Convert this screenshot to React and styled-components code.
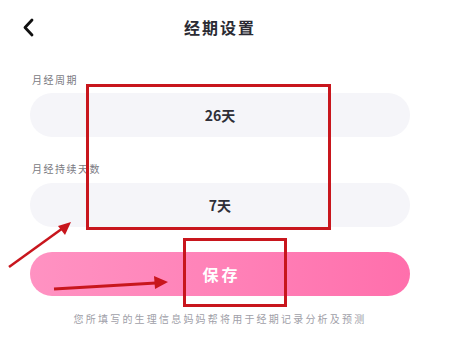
import React from 'react';
import styled, { createGlobalStyle } from 'styled-components';

const GlobalStyle = createGlobalStyle`
  html, body {
    margin: 0;
    padding: 0;
    background: #ffffff;
  }
  body {
    font-family: "Noto Sans CJK SC", "Noto Sans", sans-serif;
  }
`;

const Screen = styled.div`
  position: relative;
  width: 460px;
  height: 354px;
  overflow: hidden;
  background: #ffffff;
`;

const Header = styled.header`
  position: relative;
  width: 440px;
  height: 54px;
  display: flex;
  align-items: center;
  justify-content: center;
`;

const BackButton = styled.button`
  position: absolute;
  left: 20px;
  top: 16px;
  width: 16px;
  height: 22px;
  padding: 0;
  border: none;
  background: none;
  display: flex;
  align-items: center;
  justify-content: center;
`;

const Title = styled.h1`
  margin: 0;
  font-size: 16px;
  font-weight: 700;
  letter-spacing: 2px;
  color: #2b2b33;
`;

const Form = styled.div`
  width: 380px;
  margin-left: 30px;
  display: flex;
  flex-direction: column;
`;

const Label = styled.div`
  margin-top: ${(p) => p.$top}px;
  padding-left: 2px;
  font-size: 10px;
  line-height: 14px;
  letter-spacing: 1.5px;
  color: #7a7a82;
`;

const Field = styled.div`
  margin-top: ${(p) => p.$top}px;
  height: 44px;
  border-radius: 22px;
  background: #f5f5f9;
  display: flex;
  align-items: center;
  justify-content: center;
  font-size: 14px;
  font-weight: 700;
  color: #2f2f38;
`;

const SaveButton = styled.button`
  margin-top: 25px;
  height: 44px;
  border: none;
  border-radius: 22px;
  background: linear-gradient(90deg, #ff92c2 0%, #ff82b8 50%, #ff6fac 100%);
  color: #ffffff;
  font-family: inherit;
  font-size: 16px;
  font-weight: 700;
  letter-spacing: 3px;
  padding: 0 0 0 3px;
`;

const Note = styled.p`
  margin: 16px 0 0;
  text-align: center;
  font-size: 10px;
  line-height: 14px;
  letter-spacing: 2.2px;
  color: #a0a0a8;
`;

const Overlay = styled.svg`
  position: absolute;
  left: 0;
  top: 0;
  pointer-events: none;
`;

const RED = '#c8161d';

const Annotations = () => (
  <Overlay width="460" height="354" viewBox="0 0 460 354">
    <rect x="87.5" y="85.5" width="242" height="143" fill="none" stroke={RED} strokeWidth="3" />
    <rect x="184.5" y="239.5" width="101" height="66" fill="none" stroke={RED} strokeWidth="3" />
    <line x1="9" y1="267" x2="63" y2="228" stroke={RED} strokeWidth="2.5" />
    <polygon points="71,222 58,226 65,235" fill={RED} />
    <line x1="54" y1="289" x2="156" y2="283" stroke={RED} strokeWidth="3" />
    <polygon points="168,282 154,276 155,289" fill={RED} />
  </Overlay>
);

const App = () => (
  <Screen>
    <GlobalStyle />
    <Header>
      <BackButton aria-label="back">
        <svg width="12" height="19" viewBox="0 0 12 19">
          <path d="M10 2 L3 9.5 L10 17" fill="none" stroke="#111" strokeWidth="2.8" strokeLinecap="round" strokeLinejoin="round" />
        </svg>
      </BackButton>
      <Title>经期设置</Title>
    </Header>
    <Form>
      <Label $top={19}>月经周期</Label>
      <Field $top={6}>26天</Field>
      <Label $top={25}>月经持续天数</Label>
      <Field $top={7}>7天</Field>
      <SaveButton>保存</SaveButton>
      <Note>您所填写的生理信息妈妈帮将用于经期记录分析及预测</Note>
    </Form>
    <Annotations />
  </Screen>
);

export default App;
